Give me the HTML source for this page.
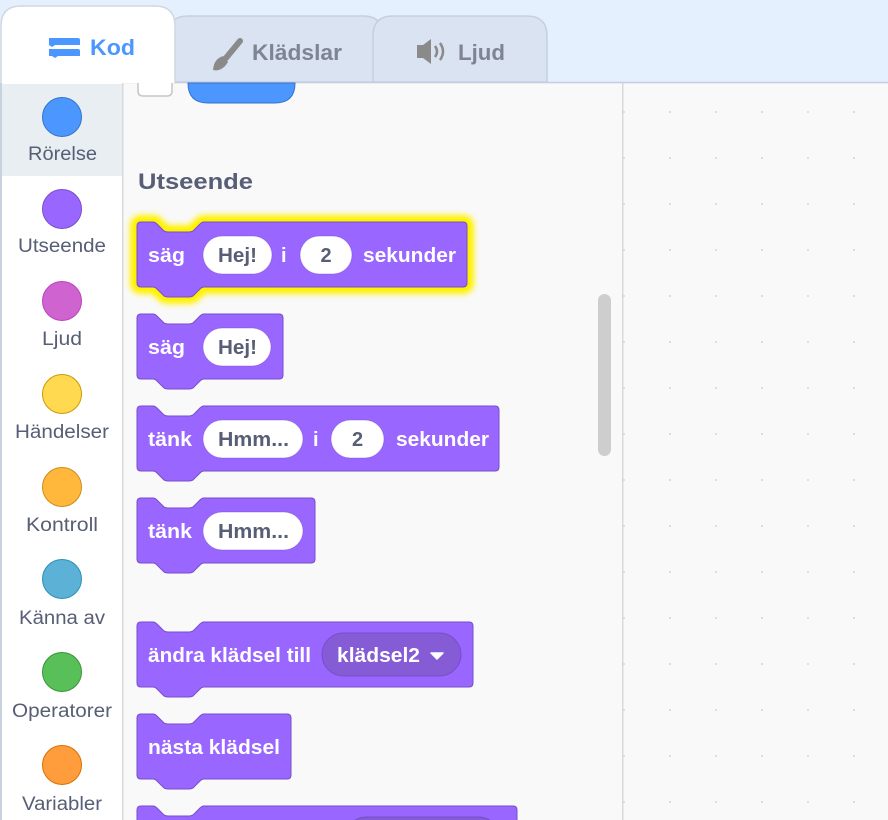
<!DOCTYPE html>
<html><head><meta charset="utf-8"><style>
html,body{margin:0;padding:0;width:888px;height:820px;overflow:hidden;background:#e5f0ff;font-family:"Liberation Sans",sans-serif}
</style></head><body>
<svg width="888" height="820" xmlns="http://www.w3.org/2000/svg" style="position:absolute;left:0;top:0;font-family:'Liberation Sans',sans-serif">
<defs>
<pattern id="dots" x="0" y="0" width="46" height="46" patternUnits="userSpaceOnUse"><circle cx="26" cy="20" r="1" fill="#d6d6d6"/></pattern>
<filter id="glow" x="-10%" y="-30%" width="120%" height="160%"><feGaussianBlur stdDeviation="3"/></filter>
</defs>
<rect x="0" y="0" width="888" height="820" fill="#e5f0ff"/>
<path d="M168,82 V36 Q168,16 188,16 H363 Q383,16 383,36 V82 Z" fill="#d9e3f2" stroke="#c5cfe0" stroke-width="1.5"/>
<path d="M373,82 V36 Q373,16 393,16 H527 Q547,16 547,36 V82 Z" fill="#d9e3f2" stroke="#c5cfe0" stroke-width="1.5"/>
<path d="M1,84 V26 Q1,6 21,6 H155 Q175,6 175,26 V84 Z" fill="#ffffff" stroke="#d0d8e4" stroke-width="1.5"/>
<g fill="#4c97ff"><path d="M49,38 H78 Q80,38 80,40 V45 H55 L52,47 L49,45 Z"/><path d="M49,49 H78 Q80,49 80,51 V56 H58 L55,58 L52,56 H49 Z"/></g>
<text x="90" y="55" font-size="22" font-weight="bold" fill="#4c97ff" textLength="45" lengthAdjust="spacingAndGlyphs">Kod</text>
<path d="M240,41 L226,58" stroke="#8a8a8a" stroke-width="6" stroke-linecap="round"/>
<path d="M224,56 Q214,58 213,70 Q222,72 228,62 Z" fill="#8a8a8a"/>
<text x="252" y="60" font-size="22" font-weight="bold" fill="#7e8494" textLength="90" lengthAdjust="spacingAndGlyphs">Klädslar</text>
<path d="M417,45 H423 L431,39 V64 L423,58 H417 Z" fill="#8a8a8a"/>
<path d="M435,46 Q439,51.5 435,57" stroke="#8a8a8a" stroke-width="2.5" fill="none"/>
<path d="M440,43 Q446,51.5 440,60" stroke="#8a8a8a" stroke-width="2.5" fill="none"/>
<text x="458" y="60" font-size="22" font-weight="bold" fill="#7e8494" textLength="47" lengthAdjust="spacingAndGlyphs">Ljud</text>
<line x1="175" y1="82.5" x2="888" y2="82.5" stroke="#c5cfe0" stroke-width="1.5"/>
<rect x="0" y="83" width="123" height="737" fill="#ffffff"/>
<rect x="0" y="83" width="2" height="737" fill="#c8d1de"/>
<rect x="2" y="84" width="120" height="92" fill="#e9eef2"/>
<rect x="122" y="83" width="1.5" height="737" fill="#d9d9d9"/>
<g font-size="19" fill="#575e75" lengthAdjust="spacingAndGlyphs">
<circle cx="62" cy="117" r="19.5" fill="#4c97ff" stroke="#3373cc" stroke-width="1"/><text x="28" y="160" textLength="69" lengthAdjust="spacingAndGlyphs">Rörelse</text>
<circle cx="62" cy="209" r="19.5" fill="#9966ff" stroke="#774dcb" stroke-width="1"/><text x="18" y="252" textLength="88" lengthAdjust="spacingAndGlyphs">Utseende</text>
<circle cx="62" cy="301" r="19.5" fill="#cf63cf" stroke="#bd42bd" stroke-width="1"/><text x="42" y="345" textLength="40" lengthAdjust="spacingAndGlyphs">Ljud</text>
<circle cx="62" cy="394" r="19.5" fill="#ffd950" stroke="#cc9900" stroke-width="1"/><text x="15" y="438" textLength="94" lengthAdjust="spacingAndGlyphs">Händelser</text>
<circle cx="62" cy="487" r="19.5" fill="#ffab19" fill-opacity=".85" stroke="#cf8b17" stroke-width="1"/><text x="26" y="531" textLength="72" lengthAdjust="spacingAndGlyphs">Kontroll</text>
<circle cx="62" cy="579" r="19.5" fill="#5cb1d6" stroke="#2e8eb8" stroke-width="1"/><text x="19" y="624" textLength="86" lengthAdjust="spacingAndGlyphs">Känna av</text>
<circle cx="62" cy="672" r="19.5" fill="#59c059" stroke="#389438" stroke-width="1"/><text x="12" y="717" textLength="100" lengthAdjust="spacingAndGlyphs">Operatorer</text>
<circle cx="62" cy="765" r="19.5" fill="#ff8c1a" fill-opacity=".85" stroke="#db6e00" stroke-width="1"/><text x="22" y="810" textLength="80" lengthAdjust="spacingAndGlyphs">Variabler</text>
</g>
<rect x="123.5" y="83.5" width="499" height="737" fill="#f9f9f9"/>
<rect x="622" y="83" width="1.5" height="737" fill="#d9d9d9"/>
<rect x="623.5" y="83.5" width="265" height="737" fill="#f9f9f9"/>
<rect x="623.5" y="83.5" width="265" height="737" fill="url(#dots)"/>
<path d="M138,83 V91 Q138,96 143,96 H167 Q172,96 172,91 V83" fill="#fff" stroke="#c6c6c6" stroke-width="1.5"/>
<path d="M188,83 Q188,103 208,103 H275 Q295,103 295,83 Z" fill="#4c97ff" stroke="#3373cc" stroke-width="1"/>
<text x="138" y="189" font-size="22" font-weight="bold" fill="#575e75" textLength="115" lengthAdjust="spacingAndGlyphs">Utseende</text>
<rect x="598" y="294" width="13" height="162" rx="6.5" fill="#cecece"/>
<path d="M137,226 Q137,222 141,222 H153 Q155,222 157,224 L164,231 Q166,232 168,232 H189 Q191,232 193,231 L200,224 Q202,222 204,222 H463 Q467,222 467,226 V283 Q467,287 463,287 H204 Q202,287 200,289 L193,296 Q191,297 189,297 H168 Q166,297 164,296 L157,289 Q155,287 153,287 H141 Q137,287 137,283 Z" fill="none" stroke="#fff200" stroke-width="14" filter="url(#glow)"/>
<path d="M137,226 Q137,222 141,222 H153 Q155,222 157,224 L164,231 Q166,232 168,232 H189 Q191,232 193,231 L200,224 Q202,222 204,222 H463 Q467,222 467,226 V283 Q467,287 463,287 H204 Q202,287 200,289 L193,296 Q191,297 189,297 H168 Q166,297 164,296 L157,289 Q155,287 153,287 H141 Q137,287 137,283 Z" fill="none" stroke="#fff200" stroke-width="6"/>
<g font-size="20" font-weight="bold">
<path d="M137,226 Q137,222 141,222 H153 Q155,222 157,224 L164,231 Q166,232 168,232 H189 Q191,232 193,231 L200,224 Q202,222 204,222 H463 Q467,222 467,226 V283 Q467,287 463,287 H204 Q202,287 200,289 L193,296 Q191,297 189,297 H168 Q166,297 164,296 L157,289 Q155,287 153,287 H141 Q137,287 137,283 Z" fill="#9966ff" stroke="#774dcb"/>
<text x="148" y="262" fill="#fff" textLength="37" lengthAdjust="spacingAndGlyphs">säg</text>
<rect x="203" y="236" width="69" height="38" rx="19" fill="#fff" stroke="#774dcb" stroke-opacity=".4"/><text x="218" y="262" fill="#575e75" textLength="39" lengthAdjust="spacingAndGlyphs">Hej!</text>
<text x="281" y="262" fill="#fff">i</text>
<rect x="300" y="236" width="52" height="38" rx="19" fill="#fff" stroke="#774dcb" stroke-opacity=".4"/><text x="326" y="262" fill="#575e75" text-anchor="middle">2</text>
<text x="363" y="262" fill="#fff" textLength="93" lengthAdjust="spacingAndGlyphs">sekunder</text>

<path d="M137,318 Q137,314 141,314 H153 Q155,314 157,316 L164,323 Q166,324 168,324 H189 Q191,324 193,323 L200,316 Q202,314 204,314 H279 Q283,314 283,318 V375 Q283,379 279,379 H204 Q202,379 200,381 L193,388 Q191,389 189,389 H168 Q166,389 164,388 L157,381 Q155,379 153,379 H141 Q137,379 137,375 Z" fill="#9966ff" stroke="#774dcb"/>
<text x="148" y="354" fill="#fff" textLength="37" lengthAdjust="spacingAndGlyphs">säg</text>
<rect x="203" y="328" width="68" height="38" rx="19" fill="#fff" stroke="#774dcb" stroke-opacity=".4"/><text x="218" y="354" fill="#575e75" textLength="39" lengthAdjust="spacingAndGlyphs">Hej!</text>

<path d="M137,410 Q137,406 141,406 H153 Q155,406 157,408 L164,415 Q166,416 168,416 H189 Q191,416 193,415 L200,408 Q202,406 204,406 H495 Q499,406 499,410 V467 Q499,471 495,471 H204 Q202,471 200,473 L193,480 Q191,481 189,481 H168 Q166,481 164,480 L157,473 Q155,471 153,471 H141 Q137,471 137,467 Z" fill="#9966ff" stroke="#774dcb"/>
<text x="148" y="446" fill="#fff" textLength="44" lengthAdjust="spacingAndGlyphs">tänk</text>
<rect x="203" y="420" width="100" height="38" rx="19" fill="#fff" stroke="#774dcb" stroke-opacity=".4"/><text x="218" y="446" fill="#575e75" textLength="71" lengthAdjust="spacingAndGlyphs">Hmm...</text>
<text x="313" y="446" fill="#fff">i</text>
<rect x="331" y="420" width="53" height="38" rx="19" fill="#fff" stroke="#774dcb" stroke-opacity=".4"/><text x="357.5" y="446" fill="#575e75" text-anchor="middle">2</text>
<text x="396" y="446" fill="#fff" textLength="93" lengthAdjust="spacingAndGlyphs">sekunder</text>

<path d="M137,502 Q137,498 141,498 H153 Q155,498 157,500 L164,507 Q166,508 168,508 H189 Q191,508 193,507 L200,500 Q202,498 204,498 H311 Q315,498 315,502 V559 Q315,563 311,563 H204 Q202,563 200,565 L193,572 Q191,573 189,573 H168 Q166,573 164,572 L157,565 Q155,563 153,563 H141 Q137,563 137,559 Z" fill="#9966ff" stroke="#774dcb"/>
<text x="148" y="538" fill="#fff" textLength="44" lengthAdjust="spacingAndGlyphs">tänk</text>
<rect x="203" y="512" width="100" height="38" rx="19" fill="#fff" stroke="#774dcb" stroke-opacity=".4"/><text x="218" y="538" fill="#575e75" textLength="71" lengthAdjust="spacingAndGlyphs">Hmm...</text>

<path d="M137,626 Q137,622 141,622 H153 Q155,622 157,624 L164,631 Q166,632 168,632 H189 Q191,632 193,631 L200,624 Q202,622 204,622 H469 Q473,622 473,626 V683 Q473,687 469,687 H204 Q202,687 200,689 L193,696 Q191,697 189,697 H168 Q166,697 164,696 L157,689 Q155,687 153,687 H141 Q137,687 137,683 Z" fill="#9966ff" stroke="#774dcb"/>
<text x="148" y="662" fill="#fff" textLength="163" lengthAdjust="spacingAndGlyphs">ändra klädsel till</text>
<rect x="322" y="633" width="139" height="43" rx="21.5" fill="#855cd6" stroke="#774dcb"/>
<text x="337" y="662" fill="#fff" textLength="83" lengthAdjust="spacingAndGlyphs">klädsel2</text>
<path d="M431,653 H443 L437,659 Z" fill="#fff" stroke="#fff" stroke-width="1.5" stroke-linejoin="round"/>

<path d="M137,718 Q137,714 141,714 H153 Q155,714 157,716 L164,723 Q166,724 168,724 H189 Q191,724 193,723 L200,716 Q202,714 204,714 H287 Q291,714 291,718 V775 Q291,779 287,779 H204 Q202,779 200,781 L193,788 Q191,789 189,789 H168 Q166,789 164,788 L157,781 Q155,779 153,779 H141 Q137,779 137,775 Z" fill="#9966ff" stroke="#774dcb"/>
<text x="148" y="754" fill="#fff" textLength="132" lengthAdjust="spacingAndGlyphs">nästa klädsel</text>

<path d="M137,810 Q137,806 141,806 H153 Q155,806 157,808 L164,815 Q166,816 168,816 H189 Q191,816 193,815 L200,808 Q202,806 204,806 H513 Q517,806 517,810 V830 H137 Z" fill="#9966ff" stroke="#774dcb"/>
<rect x="345" y="817" width="155" height="43" rx="21.5" fill="#855cd6" stroke="#774dcb"/>
</g>
</svg>
</body></html>
